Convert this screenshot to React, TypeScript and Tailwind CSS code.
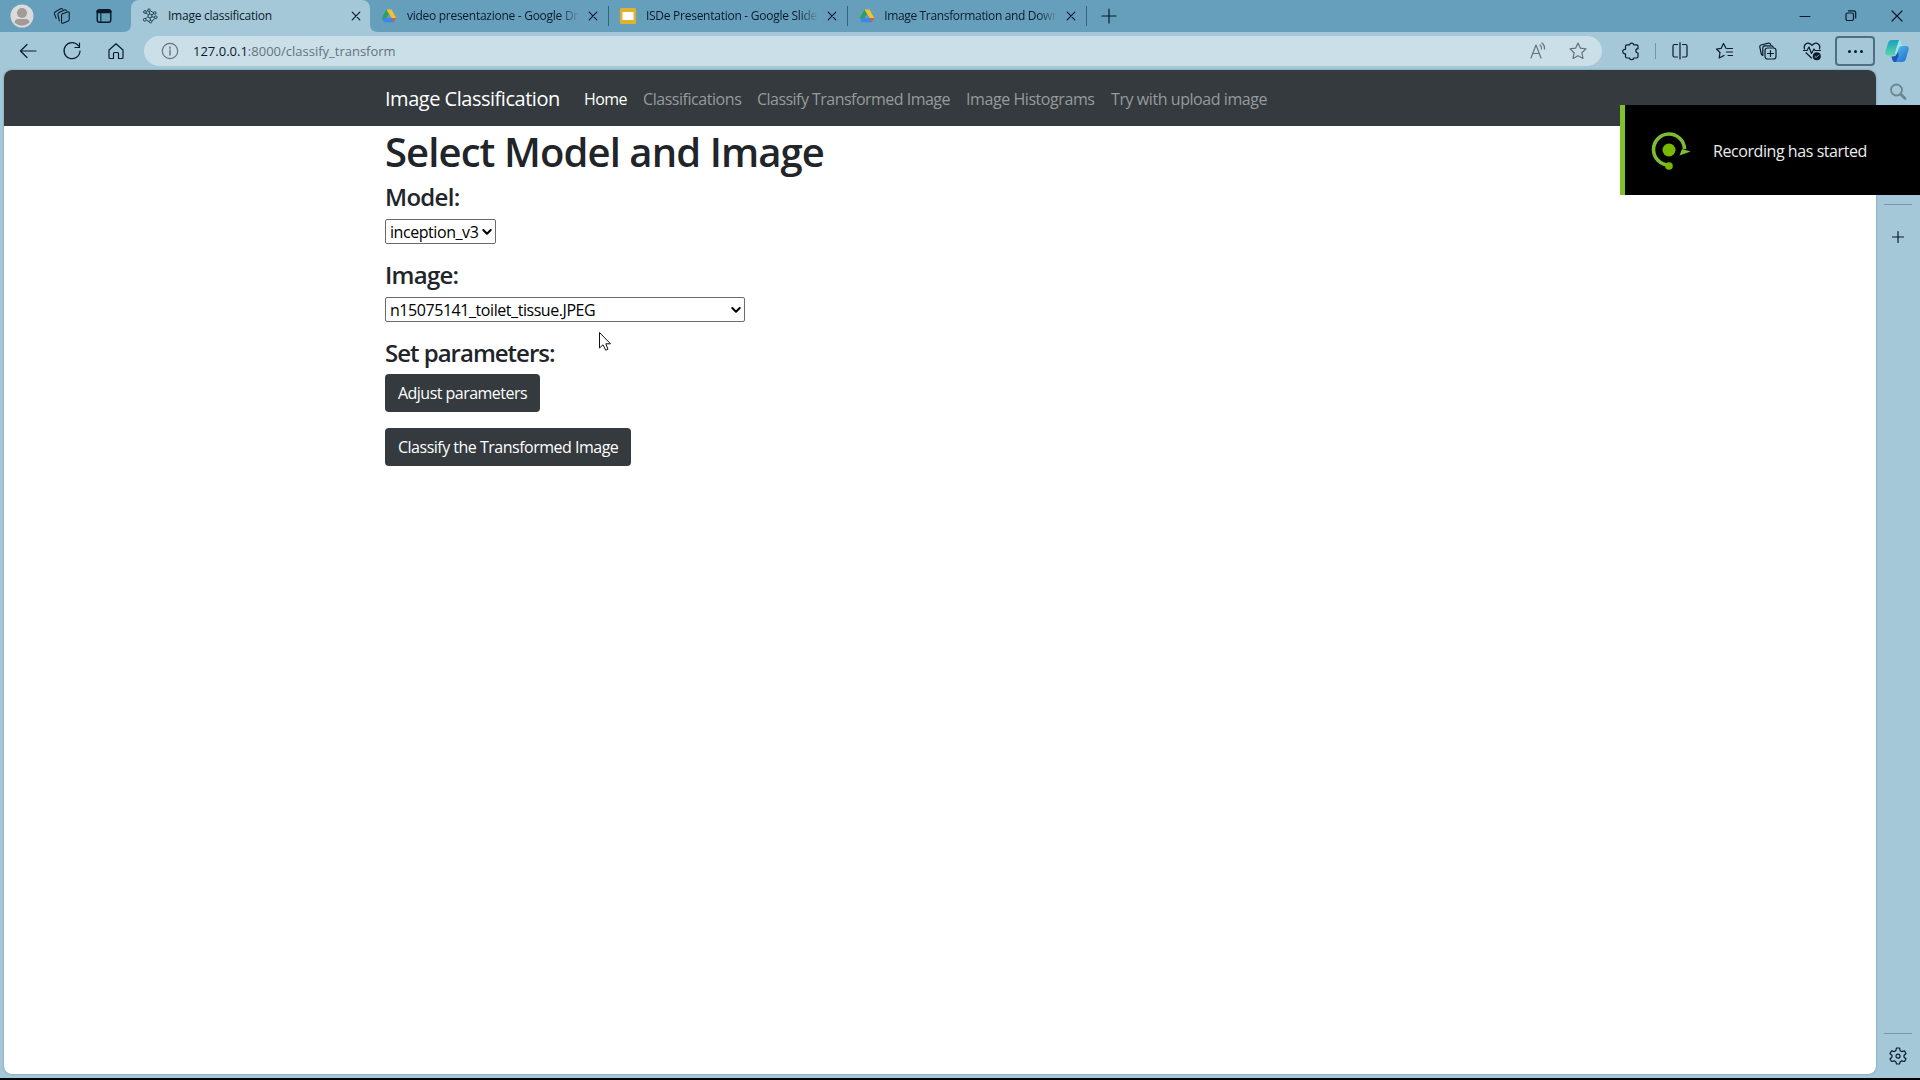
import clsx from 'clsx';

export default function App() {
  return (
    <div className="flex h-[1080px] w-[1920px] flex-col overflow-hidden bg-[#a4c8d8] font-['Open_Sans','Noto_Sans',sans-serif] text-[#0b1b2b]">
      <TabBar />
      <Toolbar />

      <div className="flex h-[1008px]">
        <main className="ml-1 h-[1004px] w-[1872px] overflow-hidden rounded-lg bg-white shadow-[0_0_2px_#5d8799]">
          <Navbar />
          <ClassifyForm />
        </main>

        <Sidebar />
      </div>

      <div className="h-0.5 bg-black" />

      <RecordingToast />
      <Cursor />
    </div>
  );
}

type Tab = {
  title: string;
  icon: React.ReactNode;
  tracking: string;
};

const tabs: Tab[] = [
  { title: 'video presentazione - Google Dr', icon: <DriveIcon />, tracking: 'tracking-[-0.27px]' },
  { title: 'ISDe Presentation - Google Slide', icon: <SlidesIcon />, tracking: 'tracking-[-0.26px]' },
  { title: 'Image Transformation and Down', icon: <DriveIcon />, tracking: 'tracking-[-0.34px]' },
];

function TabBar() {
  return (
    <header className="flex h-8 items-center bg-[#659fbb]">
      <div className="flex w-[131px] items-center pl-2.5">
        <Avatar />
        <Icon className="ml-[19px] size-[18px]">
          <path d="M3.500 12.500 1.500 7.500Q1.200 6.200 2.300 5.500L8.500 2Q10 1.300 10.800 2.500M7 15.500 5.500 8.500Q5.300 7 6.500 6.400L12.500 3.300Q14 2.700 14.800 4M9.500 9.300Q9.500 8 10.800 7.500L16.500 5.400Q18 5 18 6.500V14Q18 15 17 15.500L11 18Q9.500 18.500 9.500 17Z" />
        </Icon>
        <Icon className="ml-6 size-[18px]">
          <rect x="2.500" y="3" width="15" height="14" rx="2.500" strokeWidth="1.600" />
          <path d="M3.500 5H16.500" strokeWidth="4" />
          <path d="M6.500 6V16.500" />
        </Icon>
      </div>

      <div className="relative flex h-8 w-[239px] items-center rounded-t-lg bg-[#a4c8d8] pl-[11px]">
        <TabCorner className="-left-2" />
        <TabCorner className="-right-2 -scale-x-100" />
        <AtomIcon />
        <span className="ml-2.5 w-[183px] text-xs tracking-[-0.25px]">Image classification</span>
        <CloseIcon />
      </div>

      {tabs.map((tab) => (
        <div key={tab.title} className="flex h-8 w-[239px] items-center pl-2.5">
          <div className="flex w-[18px] justify-center">{tab.icon}</div>
          <div className="ml-[9px] w-[175px] mask-r-from-88% mask-r-to-99%">
            <span className={clsx('block whitespace-nowrap text-xs', tab.tracking)}>{tab.title}</span>
          </div>
          <span className="ml-[7px]">
            <CloseIcon />
          </span>
          <div className="ml-2.5 h-5 w-px bg-[#34647d]" />
        </div>
      ))}

      <Icon className="ml-[14px] size-4" viewBox="0 0 16 16">
        <path d="M8 1V15M1 8H15" />
      </Icon>

      <div className="ml-auto flex items-center gap-8 pr-4">
        <Icon className="size-3.5" viewBox="0 0 14 14">
          <path d="M2 7.500H12" strokeWidth="1" />
        </Icon>
        <Icon className="size-3.5" viewBox="0 0 14 14">
          <rect x="2" y="4" width="7.500" height="7.500" rx="1.500" />
          <path d="M4.500 1.800H9.500Q11.700 1.800 11.700 4V9" />
        </Icon>
        <Icon className="size-3.5" viewBox="0 0 14 14">
          <path d="M2 2 12 12M12 2 2 12" />
        </Icon>
      </div>
    </header>
  );
}

function Toolbar() {
  return (
    <div className="flex h-[38px] items-center">
      <div className="flex w-36 items-center gap-6 pl-[18px]">
        <Icon>
          <path d="M18 10H2.500M9 3.500 2.500 10 9 16.500" />
        </Icon>
        <Icon>
          <path d="M16.500 5A8 8 0 1 0 18 10M17.500 2V6.500H13" />
        </Icon>
        <Icon>
          <path d="M3 9 10 2.800 17 9V16.500Q17 17.500 16 17.500H12.500V12.500Q12.500 11.500 11.500 11.500H8.500Q7.500 11.500 7.500 12.500V17.500H4Q3 17.500 3 16.500Z" />
        </Icon>
      </div>

      <div className="flex h-[30px] w-[1458px] items-center rounded-full bg-[#cbdfe8] pr-3.5 pl-4 text-[#62747e]">
        <Icon>
          <circle cx="10" cy="10" r="7.700" />
          <path d="M10 9V14M10 6V7.300" strokeWidth="1.400" />
        </Icon>
        <span className="mt-px ml-[13px] text-[13px]">
          <span className="text-[#0b1b2b]">127.0.0.1</span>:8000/classify_transform
        </span>
        <Icon className="ml-auto size-5">
          <path d="M3 17 8 4 13 17M4.800 12.500H11.200M12 4Q13.800 5.500 13.500 8M14 2Q17 4.500 16.500 8" />
        </Icon>
        <Icon className="ml-5 size-5">
          <path d={starPath} />
        </Icon>
      </div>

      <Icon className="ml-[19px] size-5">
        <path d="M6 3.800H8.500A2.200 2.200 0 0 1 12.800 3.800H15.500Q17 3.800 17 5.300V7.700A2 2 0 0 0 17 12V15.500Q17 17 15.500 17H12.800A2.200 2.200 0 0 1 8.500 17H6Q4.500 17 4.500 15.500V12.800A2.300 2.300 0 1 1 4.500 8.300V5.300Q4.500 3.800 6 3.800Z" />
      </Icon>
      <div className="ml-3.5 h-4 w-px bg-[#7395a5]" />
      <Icon className="ml-3.5 size-5">
        <path d="M7.500 3.500H4.500Q3 3.500 3 5V14.500Q3 16 4.500 16H7.500M12.500 3.500H15.500Q17 3.500 17 5V14.500Q17 16 15.500 16H12.500M10 1.500V18" />
      </Icon>
      <Icon className="ml-[25px] size-5">
        <path d="M11 7.300 8.500 2.500 6.200 7.300 1.500 8 5 11.500 4.200 17 9 14.500M12 7.500H17.500M11.500 11H17.500M13 14.500H17.500" />
      </Icon>
      <Icon className="ml-[23px] size-5">
        <rect x="7" y="7" width="11" height="11" rx="2.500" />
        <path d="M12.500 9.500V15.500M9.500 12.500H15.500M4.800 14.500Q3.500 13.800 3.200 12.500L1.800 6Q1.500 4.500 3 4L10.500 2.200Q12 2 12.700 3.500M4.800 14V7Q4.800 4.800 7 4.800H13.500Q15 4.800 15.200 6" />
      </Icon>
      <Icon className="ml-6 size-5">
        <path d="M2.500 8Q1.500 5 3.500 3.200C6 1.200 8.500 2.500 10 4.500C11.500 2.500 14 1.200 16.500 3.200Q18.500 5 17.500 8M1.500 9.500H5L7 6 9.500 12.500 12 8 13 9.500H18.500M4 11.800 9.500 17" />
        <circle cx="14.800" cy="15.300" r="4" fill="currentColor" stroke="none" />
        <path d="M13 15.500 14.200 16.500 16.500 14.200" stroke="#a4c8d8" strokeWidth="0.900" />
      </Icon>
      <div className="ml-[13px] flex h-[30px] w-10 items-center justify-center gap-[3px] rounded border-2 border-[#516e82]">
        <span className="size-[3px] rounded-full bg-current" />
        <span className="size-[3px] rounded-full bg-current" />
        <span className="size-[3px] rounded-full bg-current" />
      </div>
      <CopilotIcon />
    </div>
  );
}

const links = [
  { label: 'Home', className: 'w-[43px] text-white tracking-[-0.55px]' },
  { label: 'Classifications', className: 'w-[98px] text-[#979a9d] tracking-[-0.45px]' },
  { label: 'Classify Transformed Image', className: 'w-[193px] text-[#979a9d] tracking-[-0.53px]' },
  { label: 'Image Histograms', className: 'w-[129px] text-[#979a9d] tracking-[-0.43px]' },
  { label: 'Try with upload image', className: 'w-[157px] text-[#979a9d] tracking-[-0.43px]' },
];

function Navbar() {
  return (
    <nav className="flex h-14 items-center gap-4 bg-[#343a3e] pt-px pl-[381px]">
      <span className="mt-px mr-[9px] w-[174px] text-xl whitespace-nowrap text-white tracking-[-0.48px]">
        Image Classification
      </span>

      {links.map((link) => (
        <a key={link.label} href="#" className={clsx('whitespace-nowrap text-base', link.className)}>
          {link.label}
        </a>
      ))}
    </nav>
  );
}

function ClassifyForm() {
  return (
    <form className="flex flex-col items-start pl-[381px] text-[#212529]">
      <h1 className="mt-0.5 mb-1.5 text-[40px] leading-12 font-semibold tracking-[-0.9px]">Select Model and Image</h1>

      <h4 className="mb-2 text-2xl leading-[29px] font-semibold tracking-[-0.7px]">Model:</h4>
      <Select value="inception_v3" className="w-[111px]" />

      <h4 className="mt-4 mb-2 text-2xl leading-[29px] font-semibold tracking-[-0.75px]">Image:</h4>
      <Select value="n15075141_toilet_tissue.JPEG" className="w-[360px]" />

      <h4 className="mt-4 mb-[7px] text-2xl leading-[29px] font-semibold tracking-[-1px]">Set parameters:</h4>
      <Button className="mb-4 w-[155px] tracking-[-0.53px]">Adjust parameters</Button>
      <Button className="w-[246px] tracking-[-0.5px]">Classify the Transformed Image</Button>
    </form>
  );
}

function Select({ value, className }: { value: string; className: string }) {
  return (
    <button
      type="button"
      className={clsx(
        'flex h-[25px] items-center justify-between rounded-xs border border-[#6b6b6b] bg-white pr-[3px] pl-1 text-base leading-none whitespace-nowrap text-black tracking-[-0.44px]',
        className,
      )}
    >
      {value}
      <Icon className="size-2.5 shrink-0" viewBox="0 0 10 10">
        <path d="M1.300 3 5 6.700 8.700 3" strokeWidth="2" />
      </Icon>
    </button>
  );
}

function Button({ className, children }: { className: string; children: React.ReactNode }) {
  return (
    <button
      type="button"
      className={clsx(
        'h-[38px] rounded bg-[#343a3e] px-[13px] text-left text-base whitespace-nowrap text-white',
        className,
      )}
    >
      {children}
    </button>
  );
}

function Sidebar() {
  return (
    <aside className="flex flex-1 flex-col items-center">
      <Icon className="mt-3 size-5 text-[#6d8593]">
        <circle cx="8.500" cy="8" r="5.500" strokeWidth="1.800" />
        <path d="M12.500 12 17 16.500" strokeWidth="2.800" />
      </Icon>
      <div className="mt-[102px] h-px w-7 bg-[#7798a8]" />
      <Icon className="mt-6 size-4" viewBox="0 0 16 16">
        <path d="M8 2.500V13.500M2.500 8H13.500" />
      </Icon>
      <div className="mt-auto h-px w-7 bg-[#7798a8]" />
      <Icon className="mt-3 mb-3 size-5">
        <path d="M8.500 2H11.500L12.200 4.700 13.800 5.600 16.500 4.800 18 7.500 16 9.500V11L18 13 16.500 15.500 13.800 14.800 12.200 15.700 11.500 18H8.500L7.800 15.700 6.200 14.800 3.500 15.500 2 13 4 11V9.500L2 7.500 3.500 4.800 6.200 5.600 7.800 4.700Z" />
        <circle cx="10" cy="10.200" r="2" />
      </Icon>
    </aside>
  );
}

function RecordingToast() {
  return (
    <div className="absolute top-[105px] left-[1620px] flex h-[90px] w-[300px] items-center border-l-5 border-[#7fc32b] bg-black">
      <svg className="ml-[25px] size-10" viewBox="0 0 40 40" fill="none">
        <path d="M19 35A15.500 15.500 0 1 1 34.500 19" stroke="#80bc33" strokeWidth="3.600" />
        <path d="M29.500 25.500 32 19 41 21.500Z" fill="#80bc33" />
        <circle cx="19" cy="20" r="6.500" fill="#78b900" />
        <circle cx="19" cy="36" r="3.800" fill="#78b900" />
      </svg>
      <span className="mt-0.5 ml-[23px] text-base whitespace-nowrap text-[#ececec] tracking-[-0.43px]">
        Recording has started
      </span>
    </div>
  );
}

function Cursor() {
  return (
    <svg className="absolute top-[331px] left-[598px] h-5 w-[14px]" viewBox="0 0 14 20">
      <path
        d="M1.500 1.500V17L5 13.800 7.700 19.200 10 18.200 7.800 12.800H12.500Z"
        fill="#fff"
        stroke="#111"
        strokeLinejoin="round"
      />
    </svg>
  );
}

const starPath = 'M10 2 12.400 7.200 18 7.900 13.900 11.800 15 17.500 10 14.700 5 17.500 6.100 11.800 2 7.900 7.600 7.200Z';

type IconProps = {
  className?: string;
  viewBox?: string;
  children: React.ReactNode;
};

function Icon({ className = 'size-5', viewBox = '0 0 20 20', children }: IconProps) {
  return (
    <svg
      className={clsx('shrink-0', className)}
      viewBox={viewBox}
      fill="none"
      stroke="currentColor"
      strokeWidth="1.2"
      strokeLinecap="round"
      strokeLinejoin="round"
    >
      {children}
    </svg>
  );
}

function CloseIcon() {
  return (
    <Icon className="size-2.5" viewBox="0 0 10 10">
      <path d="M1.200 1.200 8.800 8.800M8.800 1.200 1.200 8.800" />
    </Icon>
  );
}

function TabCorner({ className }: { className: string }) {
  return (
    <svg className={clsx('absolute bottom-0 size-2', className)} viewBox="0 0 8 8">
      <path d="M8 0V8H0Q8 8 8 0Z" fill="#a4c8d8" />
    </svg>
  );
}

function Avatar() {
  return (
    <svg className="size-6" viewBox="0 0 24 24">
      <circle cx="12" cy="12" r="11.500" fill="#d9dbdc" />
      <circle cx="12" cy="9" r="5" fill="#a39995" />
      <path d="M4.500 18.500Q5 15 8 15H16Q19 15 19.500 18.500Q12 25 4.500 18.500Z" fill="#a39995" />
    </svg>
  );
}

function AtomIcon() {
  return (
    <svg className="size-4" viewBox="0 0 16 16" fill="none" stroke="#1f4354">
      <path d="M6.500 7 3.800 4.700M7.700 6 7 3.500M9.500 7 12 5.500M6 8.500 3.500 11M9.700 8.800 12.500 9.300M8.200 10 8.500 12.500M4.500 3.500 6 2.500M4.500 12.500 7.200 13.500M8.500 3 11.500 4.500M10 13 13 10.500" />
      <circle cx="8" cy="8" r="2" />
      <circle cx="3" cy="4" r="1.400" />
      <circle cx="7" cy="2.200" r="1.300" />
      <circle cx="12.800" cy="5" r="1.300" />
      <circle cx="13.800" cy="9.200" r="1.300" />
      <circle cx="8.600" cy="13.700" r="1.300" />
      <circle cx="2.800" cy="11.800" r="1.400" />
    </svg>
  );
}

function DriveIcon() {
  return (
    <svg className="size-4" viewBox="0 0 16 16">
      <path d="M5.500 1.500 8 5.800 3.200 14.300.800 10Z" fill="#2aa25b" />
      <path d="M5.500 1.500H10.500L15.200 10H10.500Z" fill="#f2c230" />
      <path d="M5.600 10H10.500L12.800 14.300H3.200L.800 10Z" fill="#3d86ea" />
      <path d="M10.500 10H15.200L12.800 14.300Z" fill="#dc5b3c" />
      <path d="M5.600 10H10.500L8 5.800Z" fill="#659fbb" />
    </svg>
  );
}

function SlidesIcon() {
  return (
    <svg className="size-4" viewBox="0 0 16 16">
      <rect width="16" height="16" rx="1.500" fill="#e0b12f" />
      <rect x="2.500" y="4" width="11" height="8" fill="#fff" />
    </svg>
  );
}

function CopilotIcon() {
  return (
    <svg className="ml-2.5 size-6" viewBox="0 0 24 24">
      <defs>
        <linearGradient id="copilot-left" x1="0" y1="0" x2="0" y2="1">
          <stop offset="0" stopColor="#1a9fc0" />
          <stop offset="1" stopColor="#58d6a8" />
        </linearGradient>
        <linearGradient id="copilot-right" x1="0" y1="0" x2="1" y2="1">
          <stop offset="0" stopColor="#55c8ee" />
          <stop offset="1" stopColor="#2368cf" />
        </linearGradient>
      </defs>
      <path d="M7 1H14Q16 1 16.500 3L17.500 6H15Q13 6 12 9L10.500 14Q10 16.500 7.500 16.500H3Q-.500 16.500.500 12.500L3 4Q4 1 7 1Z" fill="url(#copilot-left)" />
      <path d="M16.500 7H21Q24.500 7 23.500 11L21 19.500Q20 23 17 23H10Q8 23 7.500 21L6.500 17.500H8.500Q11 17.500 12 14.500L13.500 9.500Q14 7 16.500 7Z" fill="url(#copilot-right)" />
      <path d="M6.500 17.500H8.500Q11 17.500 12 14.500L13 12 13.500 17 11 23H10Q8 23 7.500 21Z" fill="#1c55b8" />
      <path d="M14 1Q16 1 16.500 3L17.500 7H16.500Q14 7 13.500 9.500L12 14.500 10 14 12 7Z" fill="#a2e3df" />
    </svg>
  );
}
